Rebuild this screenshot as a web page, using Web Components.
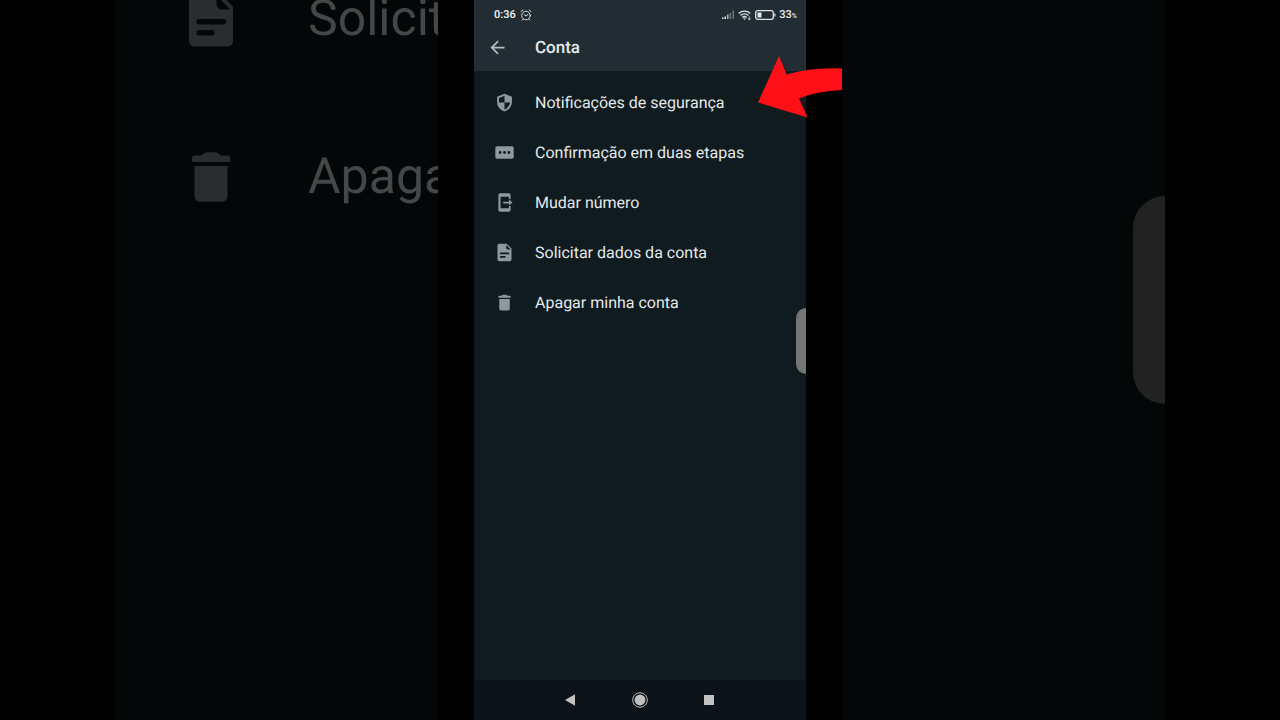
<!DOCTYPE html>
<html lang="pt-BR">
<head>
<meta charset="utf-8">
<meta name="viewport" content="width=device-width, initial-scale=1">
<title>Conta</title>
<style>
  body { margin: 0; background: #000; font-family: Roboto, "Liberation Sans", sans-serif; text-rendering: geometricPrecision; }
</style>
</head>
<body>
<video-stage>
  <blurred-panel slot="left">
    <backdrop-row icon="document">Solicit</backdrop-row>
    <backdrop-row icon="trash">Apaga</backdrop-row>
  </blurred-panel>
  <phone-screen slot="phone">
    <status-bar slot="top" time="0:36" battery="33"></status-bar>
    <title-bar slot="top">Conta</title-bar>
    <settings-row icon="shield">Notificações de segurança</settings-row>
    <settings-row icon="pin">Confirmação em duas etapas</settings-row>
    <settings-row icon="change">Mudar número</settings-row>
    <settings-row icon="document">Solicitar dados da conta</settings-row>
    <settings-row icon="trash">Apagar minha conta</settings-row>
    <nav-bar slot="bottom"></nav-bar>
  </phone-screen>
  <pointer-arrow slot="overlay"></pointer-arrow>
  <blurred-panel slot="right" handle></blurred-panel>
</video-stage>

<script>
const ICONS = {
  back: '<path d="M20 11H7.8l5.600-5.600L12 4l-8 8 8 8 1.400-1.400L7.800 13H20z"/>',
  shield: '<path d="M12 2 3.500 5.500v6c0 5 3.600 9.500 8.500 10.700 4.900-1.200 8.500-5.700 8.500-10.700v-6zM12 12h6.300c-.5 3.700-2.900 6.900-6.300 8V12H5.700V7L12 4.300z"/>',
  pin: '<path fill-rule="evenodd" d="M3.500 4.800h17a2 2 0 0 1 2 2v10.400a2 2 0 0 1-2 2h-17a2 2 0 0 1-2-2V6.800a2 2 0 0 1 2-2zM7 10.400a1.600 1.600 0 1 0 0 3.200 1.600 1.600 0 0 0 0-3.200zm5 0a1.600 1.600 0 1 0 0 3.200 1.600 1.600 0 0 0 0-3.200zm5 0a1.600 1.600 0 1 0 0 3.200 1.600 1.600 0 0 0 0-3.200z"/>',
  change: '<path d="M7 1.500h10a2 2 0 0 1 2 2V8h-2V5.500H7.500v13H17V16h2v4.500a2 2 0 0 1-2 2H7a2 2 0 0 1-2-2v-17a2 2 0 0 1 2-2z"/><path d="M10.500 11h6.700V8.500l4 3.500-4 3.500V13h-6.700z"/>',
  document: '<path fill-rule="evenodd" d="M6 2h8.500L20 7.500V20a2 2 0 0 1-2 2H6a2 2 0 0 1-2-2V4c0-1.100.9-2 2-2zm8 1.500V6.500c0 1.100.9 2 2 2h3zM7.700 12a1 1 0 0 0 0 2h8.800a1 1 0 0 0 0-2zm0 4a1 1 0 0 0 0 2h4.600a1 1 0 0 0 0-2z"/>',
  trash: '<path d="M6 19c0 1.100.9 2 2 2h8c1.100 0 2-.9 2-2V8H6zM18 4.200h-2.500L14 3h-4L8.500 4.200H6A1 1 0 0 0 5 5v1.500h14V5a1 1 0 0 0-1-.8z"/>'
};
const icon = name => `<svg viewBox="0 0 24 24" fill="currentColor" aria-hidden="true">${ICONS[name]}</svg>`;

class Base extends HTMLElement {
  connectedCallback() {
    if (!this.shadowRoot) this.attachShadow({ mode: 'open' }).innerHTML = this.render();
  }
}

customElements.define('video-stage', class extends Base {
  render() {
    return `<style>
      :host { display: grid; grid-template-columns: 114fr 324fr 404fr 323fr 115fr; min-height: 100vh; background: #000; overflow: hidden; }
      .left { grid-column: 2; display: grid; min-width: 0; }
      .center { grid-column: 3; display: grid; position: relative; padding: 0 36px; min-width: 0; }
      .right { grid-column: 4; display: grid; min-width: 0; }
    </style>
    <aside class="left"><slot name="left"></slot></aside>
    <main class="center"><slot name="phone"></slot><slot name="overlay"></slot></main>
    <aside class="right"><slot name="right"></slot></aside>`;
  }
});

customElements.define('blurred-panel', class extends Base {
  render() {
    return `<style>
      :host { display: block; position: relative; overflow: hidden; background: #030708; }
      .rows { margin-top: -60px; }
      .handle { position: absolute; right: 0; top: 196px; width: 32px; height: 208px; border-radius: 32px 0 0 32px; background: #222; }
    </style>
    <div class="rows"><slot></slot></div>${this.hasAttribute('handle') ? '<div class="handle"></div>' : ''}`;
  }
});

customElements.define('backdrop-row', class extends Base {
  render() {
    return `<style>
      :host { display: flex; align-items: center; gap: 64px; height: 158px; padding-left: 64px; font-size: 50px; line-height: 60px; color: #454647; white-space: nowrap; }
      svg { width: 66px; height: 66px; flex: none; color: #292d30; }
    </style>${icon(this.getAttribute('icon'))}<span><slot></slot></span>`;
  }
});

customElements.define('phone-screen', class extends Base {
  render() {
    return `<style>
      :host { display: flex; flex-direction: column; position: relative; background: #101b1f; color: #e4e9eb; min-width: 0; }
      header { background: #212d32; }
      .list { flex: 1; padding-top: 6px; }
      .handle { position: absolute; right: 0; top: 308px; width: 10px; height: 66px; border-radius: 10px 0 0 10px; background: #747575; }
    </style>
    <header><slot name="top"></slot></header>
    <div class="list" role="list"><slot></slot></div>
    <slot name="bottom"></slot>
    <div class="handle"></div>`;
  }
});

customElements.define('status-bar', class extends Base {
  render() {
    return `<style>
      :host { display: flex; align-items: center; height: 30px; padding: 0 9px 0 20px; font-size: 11px; line-height: 14px; font-weight: 600; color: #e6eaec; }
      .alarm { width: 12px; height: 12px; margin-left: 4px; }
      .right { display: flex; align-items: center; margin-left: auto; gap: 3px; }
      .level { display: flex; align-items: baseline; font-weight: 500; }
      small { font-size: 7px; }
      svg { display: block; }
    </style>
    <span>${this.getAttribute('time')}</span>
    <svg class="alarm" viewBox="0 0 12 12" fill="none" stroke="#d5dadd" stroke-linecap="round"><circle cx="6" cy="6.500" r="4.300"/><path d="M4.200 5.600 6 7l2-1.500M1 2.600 2.900 1M11 2.600 9.100 1M3 10.200l-.8.9M9 10.200l.8.9"/></svg>
    <div class="right">
      <svg width="13" height="10" viewBox="0 0 13 10"><path fill="#dfe4e6" d="M0 7.500h1.500V9H0zM2.500 6.500H4V9H2.500z"/><path fill="#dfe4e6" opacity=".75" d="M5 4.500h1.500V9H5z"/><path fill="#8c9599" opacity=".7" d="M7.500 3H9v6H7.500zM10.500.500H12V9h-1.500z"/></svg>
      <svg width="14" height="12" viewBox="0 0 14 12" fill="none" stroke="#dfe4e6" stroke-width="1.300"><path d="M.7 4.400a8.500 8.500 0 0 1 11.600 0M2.600 6.500a5.600 5.600 0 0 1 7.800 0M4.400 8.500a3 3 0 0 1 4.200 0"/><path d="m6.500 11-1.300-1.700h2.600z" fill="#dfe4e6" stroke="none"/><path d="M11.300 7.500v3.500M10 9.500l1.300 1.500 1.300-1.500" stroke-width=".8"/></svg>
      <svg width="21" height="10" viewBox="0 0 21 10"><rect x=".7" y=".7" width="17.600" height="8.600" rx="2" fill="none" stroke="#dfe4e6" stroke-width="1.300"/><path fill="#dfe4e6" d="M2.500 2.500h4v5h-4zM19.300 3.500h1.200v3h-1.200z"/></svg>
      <span class="level"><span>${this.getAttribute('battery')}</span><small>%</small></span>
    </div>`;
  }
});

customElements.define('title-bar', class extends Base {
  render() {
    return `<style>
      :host { display: flex; align-items: center; gap: 27px; height: 35px; padding: 0 13px 6px; }
      button { display: block; padding: 0; border: 0; background: none; color: #b3bec4; }
      svg { display: block; width: 21px; height: 21px; }
      h1 { margin: 0; font-size: 17px; line-height: 20px; font-weight: 500; }
    </style>
    <button aria-label="Voltar">${icon('back')}</button><h1><slot></slot></h1>`;
  }
});

customElements.define('settings-row', class extends Base {
  render() {
    return `<style>
      :host { display: block; }
      button { display: flex; align-items: center; gap: 20px; width: 100%; height: 50px; padding: 0 20px; border: 0; background: none; color: inherit; font: inherit; font-size: 16px; line-height: 21px; text-align: left; white-space: nowrap; text-rendering: inherit; }
      svg { width: 21px; height: 21px; flex: none; color: #8d999f; }
    </style>
    <button>${icon(this.getAttribute('icon'))}<span><slot></slot></span></button>`;
  }
  connectedCallback() { super.connectedCallback(); this.setAttribute('role', 'listitem'); }
});

customElements.define('nav-bar', class extends Base {
  render() {
    return `<style>
      :host { display: flex; align-items: center; justify-content: center; gap: 53px; height: 40px; background: #0b1218; }
      button { padding: 0; border: 0; background: none; color: #bfc1c2; }
      svg { display: block; width: 16px; height: 16px; }
    </style>
    <button aria-label="Voltar"><svg viewBox="0 0 16 16"><path fill="currentColor" d="M2 8l10-5.700v11.400z"/></svg></button>
    <button aria-label="Início"><svg viewBox="0 0 16 16"><circle cx="8" cy="8" r="7.300" fill="none" stroke="currentColor"/><circle cx="8" cy="8" r="5.400" fill="currentColor"/></svg></button>
    <button aria-label="Recentes"><svg viewBox="0 0 16 16"><path fill="currentColor" d="M3 3h10v10H3z"/></svg></button>`;
  }
});

customElements.define('pointer-arrow', class extends Base {
  render() {
    return `<style>
      :host { display: block; position: absolute; right: 0; top: 56px; }
      svg { display: block; width: 84px; height: 62px; }
    </style>
    <svg viewBox="0 0 84 62" aria-hidden="true"><path fill="#ff1016" d="M0 46.500 21 0l7.500 18.500Q55 11 84 12.500v21.500Q58 35 41 42.500L49.500 61.500z"/></svg>`;
  }
});
</script>
</body>
</html>
